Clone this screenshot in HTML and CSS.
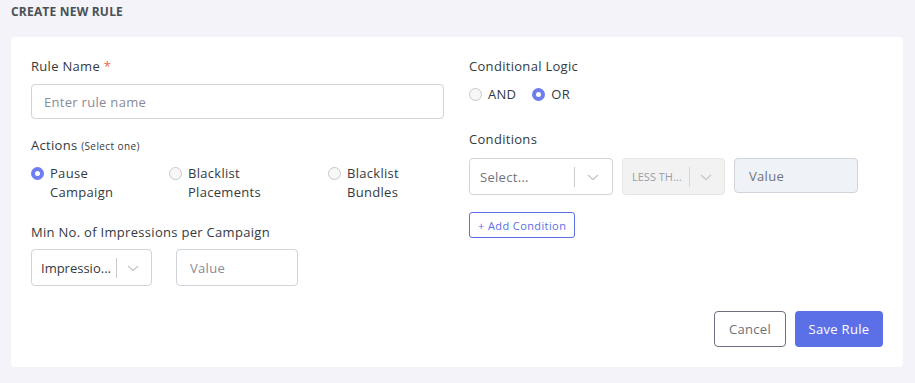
FILE: index.html
```html
<!DOCTYPE html>
<html lang="en">

<head>
    <meta charset="UTF-8">
    <meta name="viewport" content="width=device-width, initial-scale=1.0">
    <title>Create New Rule</title>
    <link rel="stylesheet" href="styles.css">
</head>

<body>
    <h6 class="page-title">CREATE NEW RULE</h6>

    <div class="rule-card">
        <div class="rule-grid">
            <!-- left column -->
            <div class="rule-col">
                <label class="field-label">Rule Name <span class="required">*</span></label>
                <input type="text" class="text-input name-input" placeholder="Enter rule name">

                <label class="field-label actions-label">Actions <small>(Select one)</small></label>
                <div class="actions-row">
                    <div class="radio-item">
                        <span class="radio checked"></span>
                        <span>Pause<br>Campaign</span>
                    </div>
                    <div class="radio-item">
                        <span class="radio"></span>
                        <span>Blacklist<br>Placements</span>
                    </div>
                    <div class="radio-item">
                        <span class="radio"></span>
                        <span>Blacklist<br>Bundles</span>
                    </div>
                </div>

                <label class="field-label impressions-label">Min No. of Impressions per Campaign</label>
                <div class="inline-row">
                    <div class="select-box impressions-select">
                        <span class="select-value">Impressio...</span>
                        <span class="select-sep"></span>
                        <svg class="chevron" width="20" height="20" viewBox="0 0 20 20"><path d="M5 8 L10 12.5 L15 8" fill="none" stroke="currentColor" stroke-width="1.5" /></svg>
                    </div>
                    <input type="text" class="text-input value-input" placeholder="Value">
                </div>
            </div>

            <!-- right column -->
            <div class="rule-col">
                <label class="field-label">Conditional Logic</label>
                <div class="logic-row">
                    <div class="radio-item">
                        <span class="radio"></span>
                        <span>AND</span>
                    </div>
                    <div class="radio-item">
                        <span class="radio checked"></span>
                        <span>OR</span>
                    </div>
                </div>

                <label class="field-label conditions-label">Conditions</label>
                <div class="condition-row">
                    <div class="select-box field-select">
                        <span class="select-value">Select...</span>
                        <span class="select-sep"></span>
                        <svg class="chevron" width="20" height="20" viewBox="0 0 20 20"><path d="M5 8 L10 12.5 L15 8" fill="none" stroke="currentColor" stroke-width="1.5" /></svg>
                    </div>
                    <div class="select-box operator-select disabled">
                        <span class="select-value">LESS TH...</span>
                        <span class="select-sep"></span>
                        <svg class="chevron" width="20" height="20" viewBox="0 0 20 20"><path d="M5 8 L10 12.5 L15 8" fill="none" stroke="currentColor" stroke-width="1.5" /></svg>
                    </div>
                    <input type="text" class="text-input condition-value" placeholder="Value" disabled>
                </div>

                <button type="button" class="add-btn">+ Add Condition</button>
            </div>
        </div>

        <div class="rule-footer">
            <button type="button" class="cancel-btn">Cancel</button>
            <button type="button" class="save-btn">Save Rule</button>
        </div>
    </div>
</body>

</html>
```

FILE: styles.css
```css
body {
    font-family: "Open Sans", "Liberation Sans", sans-serif;
    margin: 0;
    padding: 0 12px 16px 11px;
    background-color: #f3f3f9;
    /* Light Gray */
    color: #343a40;
    letter-spacing: 0.3px;
}

.page-title {
    margin: 0;
    height: 37px;
    line-height: 23px;
    font-size: 12px;
    font-weight: 700;
    color: #495057;
    letter-spacing: 0.2px;
}

.rule-card {
    background-color: #ffffff;
    /* White */
    border-radius: 4px;
    padding: 20px;
    height: 290px;
    display: flex;
    flex-direction: column;
}

.rule-grid {
    display: grid;
    grid-template-columns: 413px 413px;
    column-gap: 25px;
}

.rule-col {
    display: flex;
    flex-direction: column;
    align-items: flex-start;
}

.field-label {
    display: block;
    font-size: 13px;
    font-weight: 500;
    line-height: 18px;
    color: #343a40;
}

.field-label small {
    font-size: 10px;
    letter-spacing: 0.4px;
}

.required {
    color: #f06548;
    /* Red */
}

.text-input {
    box-sizing: border-box;
    font-family: inherit;
    font-size: 13px;
    letter-spacing: 0.3px;
    color: #343a40;
    border: 1px solid #ced4da;
    border-radius: 4px;
    padding: 0 12px;
    outline: none;
    background-color: #ffffff;
}

.text-input::placeholder {
    color: #878a99;
}

.name-input {
    width: 413px;
    height: 35px;
    margin-top: 9px;
}

.actions-label {
    margin-top: 17px;
}

.actions-row {
    display: grid;
    grid-template-columns: 138px 159px 1fr;
    width: 100%;
    margin-top: 9px;
}

.radio-item {
    display: flex;
    align-items: flex-start;
    gap: 6px;
    font-size: 13px;
    line-height: 19px;
    color: #343a40;
}

.radio {
    box-sizing: border-box;
    flex: none;
    width: 13px;
    height: 13px;
    margin-top: 3px;
    border-radius: 50%;
    border: 1px solid #c5c8ce;
    background-color: #f7f7f8;
}

.radio.checked {
    border: 4px solid #6e7ef0;
    background-color: #ffffff;
}

.impressions-label {
    margin-top: 21px;
}

.inline-row {
    display: flex;
    gap: 24px;
    margin-top: 8px;
}

.select-box {
    box-sizing: border-box;
    display: flex;
    align-items: center;
    height: 37px;
    border: 1px solid #ced4da;
    border-radius: 4px;
    background-color: #ffffff;
    font-size: 13px;
    color: #343a40;
}

.select-value {
    flex: 1;
    min-width: 0;
    padding-left: 10px;
    white-space: nowrap;
    overflow: hidden;
}

.select-sep {
    flex: none;
    width: 1px;
    height: 20px;
    background-color: #c8cbd0;
}

.chevron {
    flex: none;
    color: #c8cbd0;
    margin: 0 9px 0 8px;
}

.impressions-select {
    width: 121px;
    letter-spacing: 0;
}

.impressions-select .select-value {
    padding-left: 9px;
}

.impressions-select .chevron {
    margin: 0 8px 0 6px;
}

.value-input {
    width: 122px;
    height: 37px;
    padding-left: 13px;
}

.logic-row {
    display: flex;
    gap: 16px;
    margin-top: 10px;
}

.conditions-label {
    margin-top: 26px;
}

.condition-row {
    display: flex;
    align-items: flex-start;
    gap: 9px;
    margin-top: 10px;
}

.field-select {
    width: 144px;
}

.field-select .select-value {
    color: #6f737b;
}

.operator-select {
    width: 103px;
    background-color: #f2f2f2;
    border-color: #e6e6e6;
    color: #9a9ea6;
    font-size: 11px;
    letter-spacing: 0;
}

.operator-select .select-value {
    padding-left: 9px;
}

.operator-select .select-sep {
    background-color: #d6d8dc;
}

.operator-select .chevron {
    margin: 0 8px 0 6px;
}

.condition-value {
    width: 124px;
    height: 35px;
    background-color: #eff2f7;
    /* Light Blue Gray */
    border-color: #ced4da;
    padding-left: 14px;
}

.condition-value::placeholder {
    color: #6f737b;
}

.add-btn {
    margin-top: 17px;
    height: 26px;
    padding: 0 8px;
    font-family: inherit;
    font-size: 11px;
    letter-spacing: 0.4px;
    color: #5b6fe6;
    background-color: #ffffff;
    border: 1px solid #5b6fe6;
    border-radius: 3px;
    cursor: pointer;
}

.rule-footer {
    margin-top: auto;
    display: flex;
    justify-content: flex-end;
    gap: 9px;
}

.cancel-btn,
.save-btn {
    height: 36px;
    font-family: inherit;
    font-size: 13px;
    letter-spacing: 0.3px;
    border-radius: 4px;
    cursor: pointer;
}

.cancel-btn {
    width: 72px;
    color: #6c6f78;
    background-color: #ffffff;
    border: 1px solid #6c6f80;
}

.save-btn {
    width: 88px;
    color: #ffffff;
    background-color: #5b6fe6;
    /* Indigo */
    border: none;
    font-weight: 500;
}
```
